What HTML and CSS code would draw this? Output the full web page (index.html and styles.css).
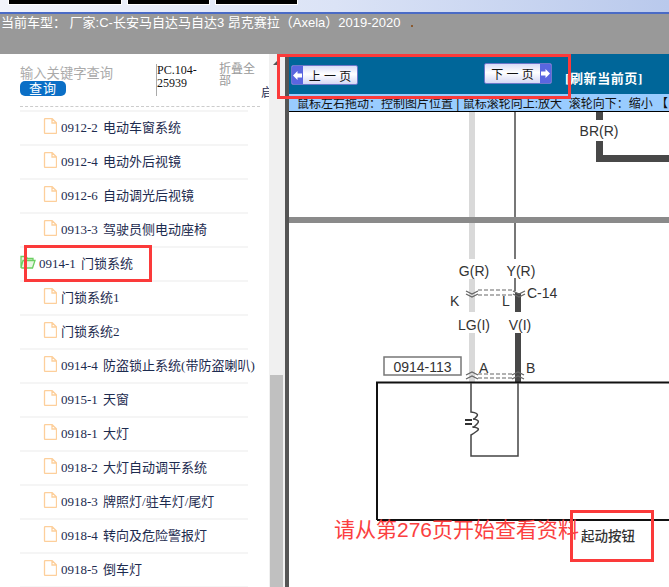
FILE: index.html
```html
<!DOCTYPE html>
<html lang="zh">
<head>
    <meta charset="UTF-8">
    <meta name="viewport" content="width=device-width, initial-scale=1.0">
    <title>当前车型</title>
    <link rel="stylesheet" href="styles.css">
</head>
<body>
    <svg class="defs" width="0" height="0">
        <symbol id="file" viewBox="0 0 14 16">
            <path d="M1.5 1.5a1 1 0 0 1 1-1H9l4.500 4.500V14.500a1 1 0 0 1-1 1H2.500a1 1 0 0 1-1-1Z M9 .5V5h4.500" fill="none" stroke="#fdcf9b" stroke-width="1.300"/>
        </symbol>
    </svg>

    <div class="topstrip">
        <span class="tab tab-one"></span>
        <span class="tab tab-two"></span>
        <span class="tab tab-three"></span>
    </div>
    <div class="carbar">
        <span>当前车型： 厂家:C-长安马自达马自达3 昂克赛拉（Axela）2019-2020</span><span class="carbar-dot"></span>
    </div>

    <div class="workspace">
        <div class="sidebar">
            <div class="search">
                <div class="search-box">
                    <div class="search-hint">输入关键字查询</div>
                    <button class="search-btn">查询</button>
                </div>
                <div class="search-code">PC.104-25939</div>
                <div class="search-fold">折叠全部</div>
                <div class="search-more">启</div>
            </div>
            <ul class="tree">
                <li class="leaf"><svg class="ico"><use href="#file"/></svg>0912-2 电动车窗系统</li>
                <li class="leaf"><svg class="ico"><use href="#file"/></svg>0912-4 电动外后视镜</li>
                <li class="leaf"><svg class="ico"><use href="#file"/></svg>0912-6 自动调光后视镜</li>
                <li class="leaf"><svg class="ico"><use href="#file"/></svg>0913-3 驾驶员侧电动座椅</li>
                <li class="branch">
                    <svg class="ico-folder" viewBox="0 0 16 14">
                        <path d="M1 12.500V1.500h5l1.500 2H13v2 M1 12.500l2-7h12l-2.500 7.500H2Z" fill="#e8f7e4" stroke="#6ccf62" stroke-width="1.300"/>
                    </svg>0914-1 门锁系统
                </li>
                <li class="leaf"><svg class="ico"><use href="#file"/></svg>门锁系统1</li>
                <li class="leaf"><svg class="ico"><use href="#file"/></svg>门锁系统2</li>
                <li class="leaf"><svg class="ico"><use href="#file"/></svg>0914-4 防盗锁止系统(带防盗喇叭)</li>
                <li class="leaf"><svg class="ico"><use href="#file"/></svg>0915-1 天窗</li>
                <li class="leaf"><svg class="ico"><use href="#file"/></svg>0918-1 大灯</li>
                <li class="leaf"><svg class="ico"><use href="#file"/></svg>0918-2 大灯自动调平系统</li>
                <li class="leaf"><svg class="ico"><use href="#file"/></svg>0918-3 牌照灯/驻车灯/尾灯</li>
                <li class="leaf"><svg class="ico"><use href="#file"/></svg>0918-4 转向及危险警报灯</li>
                <li class="leaf"><svg class="ico"><use href="#file"/></svg>0918-5 倒车灯</li>
            </ul>
        </div>

        <div class="scrollbar">
            <span class="scroll-arrow"></span>
            <span class="scroll-thumb"></span>
        </div>

        <div class="viewer">
            <div class="toolbar">
                <button class="page-btn page-prev"><span class="page-arrow">
                    <svg width="9" height="9" viewBox="0 0 9 9"><path d="M0 4.500 4.500 0v2.500H9v4H4.500V9Z" fill="#fff"/></svg>
                </span><span class="page-label">上 一 页</span></button>
                <button class="page-btn page-next"><span class="page-label">下 一 页</span><span class="page-arrow">
                    <svg width="9" height="9" viewBox="0 0 9 9"><path d="M9 4.500 4.500 0v2.500H0v4h4.500V9Z" fill="#fff"/></svg>
                </span></button>
                <span class="refresh">[刷新当前页]</span>
            </div>
            <div class="hints">鼠标左右拖动：控制图片位置 | 鼠标滚轮向上:放大&nbsp;&nbsp;滚轮向下：缩小 【←</div>

            <svg class="diagram" viewBox="289 112 380 475" width="380" height="475">
                <!-- wires running down from the previous block -->
                <g fill="#d9d9d9">
                    <rect x="469" y="112" width="6" height="147"/>
                    <rect x="469" y="279" width="6" height="33"/>
                    <rect x="469" y="333" width="6" height="49"/>
                </g>
                <g fill="#777">
                    <rect x="514" y="112" width="2" height="147"/>
                    <rect x="514" y="278" width="2" height="13"/>
                </g>
                <rect x="289" y="217" width="380" height="6" fill="#8a8a8a"/>
                <g fill="#484848">
                    <rect x="515" y="293" width="6" height="19"/>
                    <rect x="515" y="333" width="6" height="49"/>
                    <rect x="596" y="112" width="7" height="8"/>
                    <path d="M596 141h7v14h66v7h-73Z"/>
                </g>

                <!-- connector marks -->
                <g fill="none" stroke="#999" stroke-width="1.500" stroke-dasharray="4 2">
                    <path d="M478 290h36M478 295h36"/>
                    <path d="M478 374h36M478 378h36"/>
                </g>
                <g fill="none" stroke="#666" stroke-width="1.300">
                    <path d="M466 291l6 3 6-3M466 294l6 3 6-3"/>
                    <path d="M513 291l6 3 6-3M513 294l6 3 6-3"/>
                    <path d="M466 375l6-3 6 3M466 379l6-3 6 3"/>
                    <path d="M512 375l6-3 6 3M512 379l6-3 6 3"/>
                </g>

                <rect x="384" y="357" width="77" height="18" fill="#fff" stroke="#777" stroke-width="1.500"/>

                <!-- component outline -->
                <path d="M377 520V382.500H669M377 520H669" fill="none" stroke="#111" stroke-width="2"/>
                <path d="M471 383V412q8 1 6 4t-4 3q8 1 4 5t-4 3q8 1 4 4t-6 4V456H518V383" fill="none" stroke="#444" stroke-width="1.500"/>
                <path d="M465 420h7M465 424h7" stroke="#333" stroke-width="2"/>

                <g class="wire-label">
                    <text x="599" y="136" text-anchor="middle">BR(R)</text>
                    <text x="474" y="276" text-anchor="middle">G(R)</text>
                    <text x="521" y="276" text-anchor="middle">Y(R)</text>
                    <text x="527" y="298">C-14</text>
                    <text x="450" y="306">K</text>
                    <text x="502" y="306">L</text>
                    <text x="474" y="330" text-anchor="middle">LG(I)</text>
                    <text x="520" y="330" text-anchor="middle">V(I)</text>
                    <text x="422.500" y="372" text-anchor="middle">0914-113</text>
                    <text x="479" y="373">A</text>
                    <text x="526" y="373">B</text>
                </g>
                <text class="part-label" x="581" y="541">起动按钮</text>
            </svg>
        </div>
    </div>

    <!-- annotations someone drew over the screenshot -->
    <div class="mark mark-nav"></div>
    <div class="mark mark-row"></div>
    <div class="mark mark-part"></div>
    <div class="note">请从第276页开始查看资料</div>
</body>
</html>
```

FILE: styles.css
```css
html, body {
    margin: 0;
    padding: 0;
}

body {
    position: relative;
    width: 669px;
    height: 587px;
    overflow: hidden;
    background-color: #fff;
    font-family: "Liberation Sans", "Noto Sans CJK SC", sans-serif;
}

.defs {
    position: absolute;
}

/* top window strip */
.topstrip {
    display: flex;
    height: 12px;
    padding-left: 8px;
    gap: 5px;
    background: linear-gradient(to right, #f2f4fb, #dbe3f6 50%, #b9c9ec);
    border-bottom: 2px solid #4a6bc6;
}

.tab {
    height: 4px;
    background-color: #000;
    border: 1px solid #fff;
    border-top: 0;
}

.tab-one { width: 112px; }
.tab-two { width: 81px; }
.tab-three { width: 81px; }

.carbar {
    height: 40px;
    box-sizing: border-box;
    padding: 0 0 0 1px;
    background-color: #999;
    color: #fff;
    font-size: 13px;
    line-height: 17px;
    white-space: nowrap;
}

.carbar-dot {
    display: inline-block;
    width: 2px;
    height: 2px;
    margin-left: 11px;
    background-color: #8a5a30;
}

.workspace {
    display: flex;
    height: 533px;
}

/* left tree */
.sidebar {
    width: 269px;
    flex-shrink: 0;
    overflow: hidden;
}

.search {
    display: flex;
    height: 52px;
    margin-left: 20px;
    margin-right: 9px;
    border-bottom: 1px dashed #ccc;
}

.search-box {
    flex: none;
    width: 136px;
    padding-top: 12px;
}

.search-hint {
    color: #aaa;
    font-size: 13.300px;
    line-height: 15px;
}

.search-btn {
    display: block;
    width: 46px;
    height: 15px;
    padding: 0;
    border: 0;
    border-radius: 5px;
    background-color: #0b6fc6;
    color: #fff;
    font-family: inherit;
    font-size: 13px;
    line-height: 15px;
    letter-spacing: 1px;
}

.search-code {
    flex: none;
    width: 63px;
    height: 32px;
    margin-top: 10px;
    border-left: 1px solid #aaa;
    box-sizing: border-box;
    color: #111;
    font-family: "Liberation Serif", serif;
    font-size: 12px;
    line-height: 13px;
    word-break: break-word;
    padding-right: 18px;
}

.search-fold {
    flex: none;
    width: 37px;
    margin-top: 9px;
    color: #999;
    font-size: 12px;
    line-height: 12px;
}

.search-more {
    flex: none;
    margin: 32px 0 0 5px;
    height: 14px;
    width: 8px;
    overflow: hidden;
    color: #1d2b4f;
    font-size: 12px;
    line-height: 14px;
    white-space: nowrap;
}

.tree {
    list-style: none;
    margin: 3px 0 0 20px;
    padding: 0;
    width: 228px;
    border-top: 2px solid #f5f5f5;
}

.tree li {
    display: flex;
    align-items: center;
    box-sizing: border-box;
    height: 34px;
    padding-bottom: 4px;
    border-bottom: 2px solid #f5f5f5;
    color: #1d2b4f;
    font-family: "Liberation Serif", "Noto Sans CJK SC", serif;
    font-size: 13px;
    word-spacing: 2px;
    white-space: nowrap;
}

.leaf {
    padding-left: 23px;
}

.ico {
    width: 14px;
    height: 16px;
    margin-right: 4px;
    flex-shrink: 0;
}

.ico-folder {
    width: 16px;
    height: 14px;
    margin-right: 3px;
    flex-shrink: 0;
}

/* fake scrollbar */
.scrollbar {
    position: relative;
    width: 16px;
    flex-shrink: 0;
    background-color: #f0f0f0;
}

.scroll-arrow {
    position: absolute;
    top: 6px;
    left: 4px;
    border-left: 5px solid transparent;
    border-bottom: 5px solid #555;
}

.scroll-thumb {
    position: absolute;
    top: 321px;
    bottom: 0;
    left: 1px;
    width: 13px;
    background-color: #c0c0c0;
}

/* right side */
.viewer {
    flex: 1;
    min-width: 0;
    border-left: 4px solid #555;
}

.toolbar {
    display: flex;
    align-items: flex-start;
    height: 40px;
    box-sizing: border-box;
    padding: 9px 0 0 2px;
    background-color: #006699;
}

.page-btn {
    display: flex;
    align-items: center;
    width: 67px;
    height: 20px;
    padding: 0;
    border: 1px solid #6d77c9;
    border-radius: 2px;
    background: linear-gradient(to bottom, #d9dcf7, #fff 45%, #d5d8f5);
    color: #111;
    font-family: inherit;
    font-size: 12px;
    overflow: hidden;
}

.page-prev {
    margin-top: 2px;
}

.page-next {
    margin-left: 126px;
    width: 68px;
    height: 21px;
}

.page-arrow {
    display: flex;
    align-items: center;
    justify-content: center;
    width: 11px;
    height: 100%;
    background-color: #5a66e0;
    flex-shrink: 0;
}

.page-label {
    flex: 1;
    text-align: center;
    white-space: nowrap;
}

.refresh {
    margin: 8px 0 0 13px;
    color: #fff;
    font-family: "Liberation Serif", "Noto Sans CJK SC", serif;
    font-size: 13px;
    font-weight: bold;
    line-height: 16px;
    letter-spacing: 0.6px;
    white-space: nowrap;
}

.hints {
    height: 18px;
    box-sizing: border-box;
    padding-left: 8px;
    background-color: #99ccff;
    border-bottom: 1px solid #000;
    color: #111;
    font-size: 12px;
    line-height: 20px;
    white-space: nowrap;
    overflow: hidden;
}

.diagram {
    display: block;
}

.wire-label text {
    fill: #333;
    font-family: "Liberation Sans", sans-serif;
    font-size: 14px;
}

.part-label {
    fill: #333;
    font-family: "Noto Sans CJK SC", sans-serif;
    font-size: 13.500px;
    font-weight: 500;
}

/* red annotations */
.mark {
    position: absolute;
    box-sizing: border-box;
    border: 3px solid #fb3a3a;
}

.mark-nav {
    left: 277px;
    top: 54px;
    width: 294px;
    height: 45px;
}

.mark-row {
    left: 24px;
    top: 245px;
    width: 128px;
    height: 37px;
}

.mark-part {
    left: 570px;
    top: 510px;
    width: 84px;
    height: 52px;
}

.note {
    position: absolute;
    left: 334px;
    top: 516px;
    color: #fb4040;
    font-size: 21px;
    line-height: 28px;
    white-space: nowrap;
}
```
